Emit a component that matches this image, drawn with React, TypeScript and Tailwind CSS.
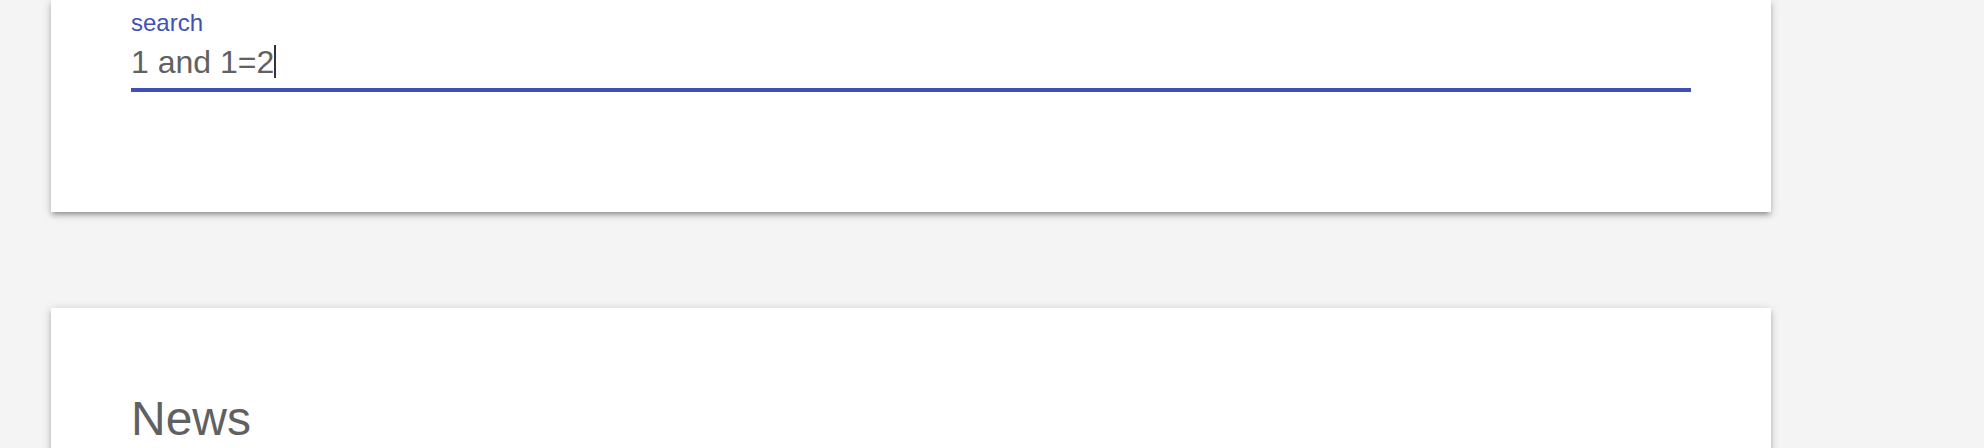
const cardShadow =
  'shadow-[0_4px_4px_0_rgba(0,0,0,0.14),0_6px_2px_-4px_rgba(0,0,0,0.12),0_2px_9px_0_rgba(0,0,0,0.2)]';

const SearchCard = () => (
  <div className={`bg-white w-[1720px] px-[80px] pt-[11px] pb-[120px] ${cardShadow}`}>
    <label className="block text-[24px] leading-[24px] text-[#3f51b5]">search</label>
    <div className="mt-[7px] pb-[6px] border-b-4 border-[#3f51b5]">
      <div className="h-[40px] text-[32px] leading-[40px] text-[#616161] whitespace-pre">
        1 and 1=2
        <span className="inline-block w-[2px] h-[33px] bg-[#333] align-[-5px]" />
      </div>
    </div>
  </div>
);

const NewsCard = () => (
  <div className={`bg-white w-[1720px] px-[80px] pt-[84px] pb-[60px] ${cardShadow}`}>
    <h5 className="text-[48px] leading-[53px] text-[#616161]">News</h5>
  </div>
);

export default function App() {
  return (
    <div
      className="min-h-screen bg-[#f4f4f4] px-[51px] overflow-hidden"
      style={{ fontFamily: '"Liberation Sans", Arial, sans-serif' }}
    >
      <div className="flex flex-col gap-[96px]">
        <SearchCard />
        <NewsCard />
      </div>
    </div>
  );
}
